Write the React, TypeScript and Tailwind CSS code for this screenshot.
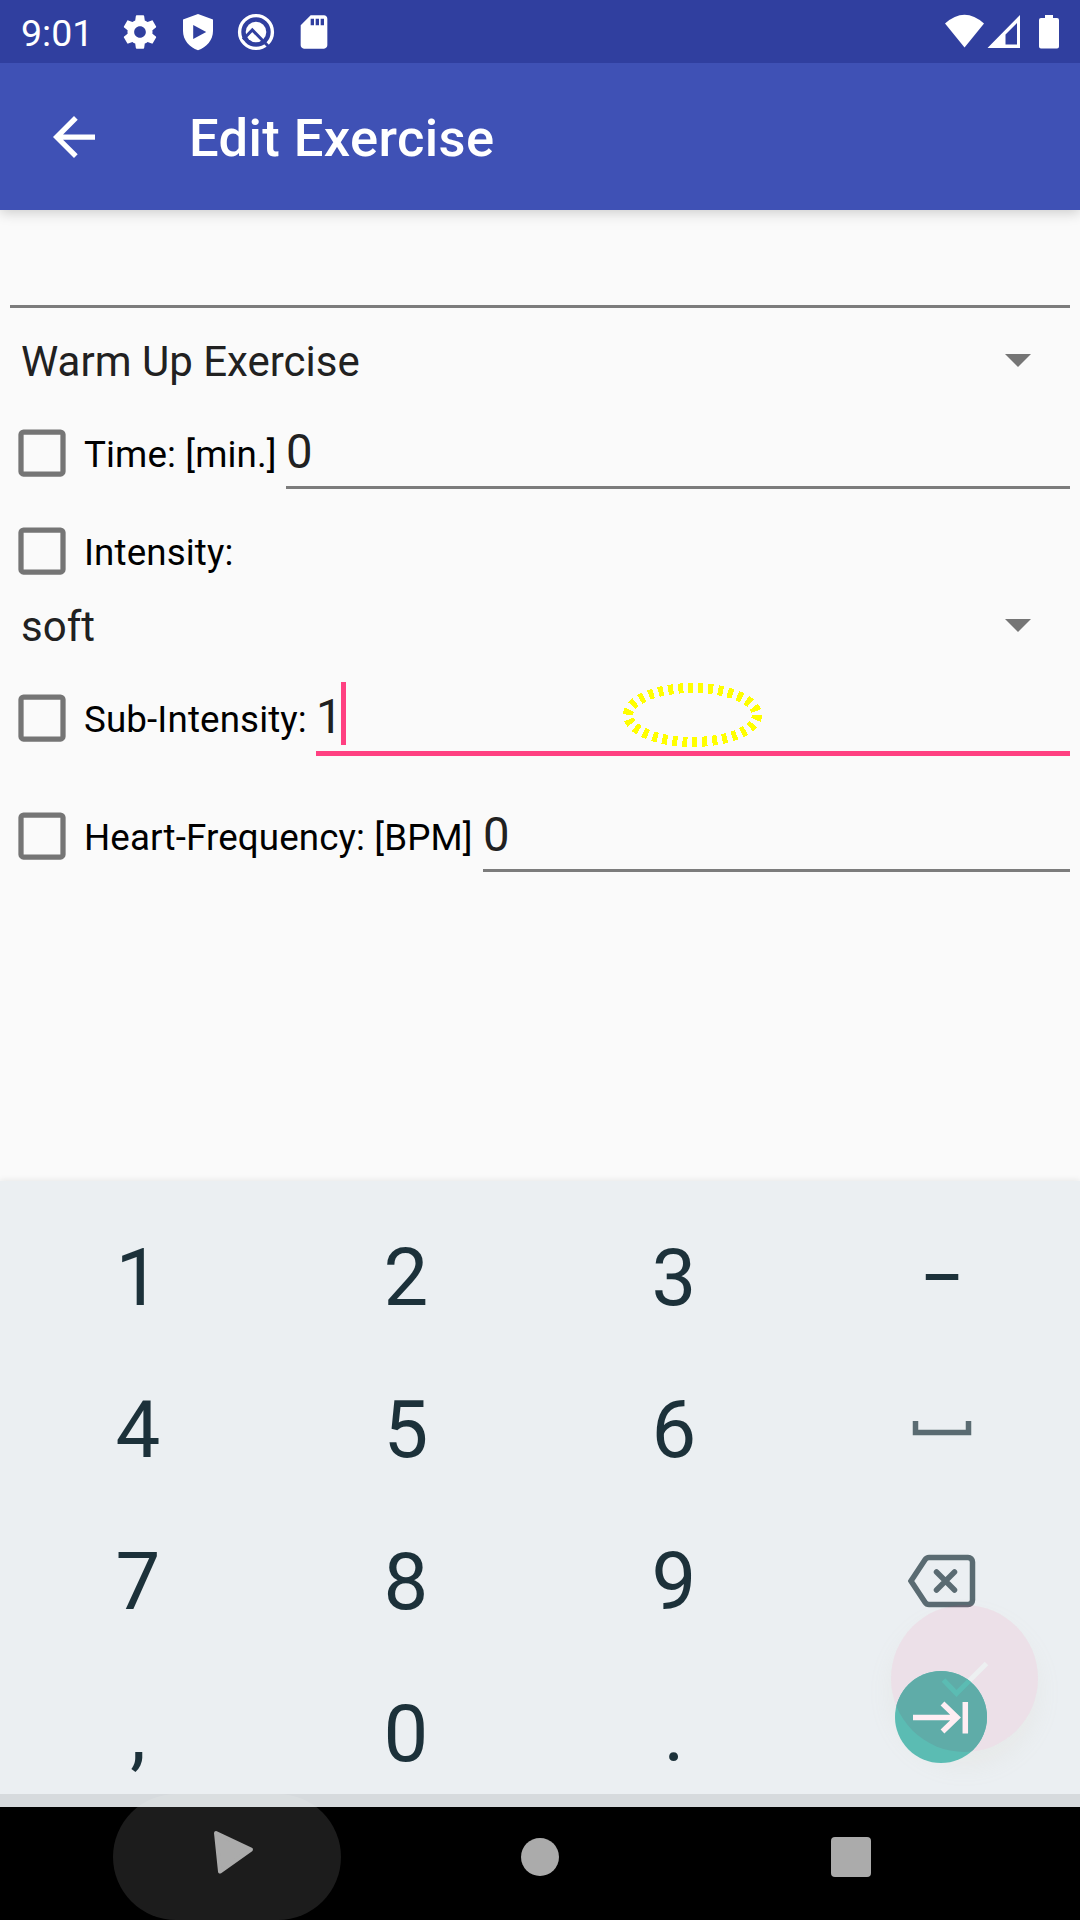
import React from "react";

const Gear = () => (
  <svg viewBox="0 0 24 24" className="size-10" fill="#fff">
    <path d="M19.43 12.98c.04-.32.07-.64.07-.98s-.03-.66-.07-.98l2.11-1.65c.19-.15.24-.42.12-.64l-2-3.46c-.12-.22-.39-.3-.61-.22l-2.49 1c-.52-.4-1.08-.73-1.69-.98l-.38-2.65C14.46 2.18 14.25 2 14 2h-4c-.25 0-.46.18-.49.42l-.38 2.65c-.61.25-1.17.59-1.69.98l-2.49-1c-.23-.09-.49 0-.61.22l-2 3.46c-.13.22-.07.49.12.64l2.11 1.65c-.04.32-.07.65-.07.98s.03.66.07.98l-2.11 1.65c-.19.15-.24.42-.12.64l2 3.46c.12.22.39.3.61.22l2.49-1c.52.4 1.08.73 1.69.98l.38 2.65c.03.24.24.42.49.42h4c.25 0 .46-.18.49-.42l.38-2.65c.61-.25 1.17-.59 1.69-.98l2.49 1c.23.09.49 0 .61-.22l2-3.46c.12-.22.07-.49-.12-.64l-2.11-1.65zM12 15.500c-1.930 0-3.500-1.570-3.500-3.500s1.570-3.500 3.500-3.500 3.500 1.570 3.500 3.500-1.570 3.500-3.500 3.500z" />
  </svg>
);

const Shield = () => (
  <svg viewBox="0 0 40 40" className="size-10" fill="#fff" fillRule="evenodd">
    <path d="M20 2 35 7.500V19c0 9-6.500 16.500-15 19.200C11.500 35.500 5 28 5 19V7.500zM15.200 13v14l13-7z" />
  </svg>
);

const Doctor = () => (
  <svg viewBox="0 0 40 40" className="size-10" fill="none">
    <circle cx="20" cy="20" r="16.400" stroke="#fff" strokeWidth="3.400" />
    <circle cx="20" cy="20" r="10.300" fill="#fff" />
    <path d="M7 27.500 16.300 18 34 36" stroke="#303f9f" strokeWidth="3" />
  </svg>
);

const SdCard = () => (
  <svg viewBox="0 0 24 24" className="size-10" fill="#fff">
    <path d="M18 2h-8L4.020 8 4 20c0 1.100.9 2 2 2h12c1.100 0 2-.9 2-2V4c0-1.100-.9-2-2-2zm-6 6h-2V4h2v4zm3 0h-2V4h2v4zm3 0h-2V4h2v4z" />
  </svg>
);

const Checkbox = () => (
  <svg viewBox="0 0 48 48" className="ml-[18px] size-12 shrink-0">
    <rect x="3" y="3" width="42" height="42" rx="2.500" fill="none" stroke="#757575" strokeWidth="5.250" />
  </svg>
);

const Caret = () => (
  <svg viewBox="0 0 26 13" className="mr-[49.500px] h-[13px] w-[26px]">
    <path d="M0 0h26L13 13z" fill="#757575" />
  </svg>
);

const Spinner = ({ text, className }: { text: string; className: string }) => (
  <div className={`flex items-center justify-between pl-[21px] text-[42px] text-[#212121] ${className}`}>
    <span className="mt-0.5">{text}</span>
    <Caret />
  </div>
);

const Field = ({ label, value, width, focused }: { label: string; value: string; width: string; focused?: boolean }) => (
  <div className="flex h-[118px] shrink-0 pr-2.5">
    <div className="flex items-center">
      <Checkbox />
    </div>
    <label className={`ml-[18px] mt-[39px] h-11 shrink-0 whitespace-nowrap text-[36.750px] leading-[44px] tracking-[0.120px] text-black ${width}`}>{label}</label>
    <div
      className={`flex grow text-[47.250px] text-[#212121] ${focused ? "h-[97px] border-b-[5px] border-[#ff4081]" : "h-[95px] border-b-[3px] border-[#7c7c7c]"}`}
    >
      <span className="mt-[30px] h-14 leading-[56px]">{value}</span>
      {focused && <i className="-ml-[1.500px] mt-[23px] h-[63px] w-[5px] bg-[#ff4081]" />}
    </div>
  </div>
);

const Space = () => (
  <svg viewBox="0 0 60 16" className="h-4 w-[60px]">
    <path d="M3.500 1v11.500h53V1" fill="none" stroke="#5a6b72" strokeWidth="5.500" />
  </svg>
);

const Backspace = () => (
  <svg viewBox="0 0 68 54" className="mt-px h-[54px] w-[68px]" fill="none" stroke="#5a6b72" strokeWidth="5.500">
    <path d="M21 3.500h39a4.500 4.500 0 0 1 4.500 4.500v38a4.500 4.500 0 0 1-4.500 4.500H21q-2.500 0-4-2.300L3 27 17 5.800Q18.500 3.500 21 3.500z" />
    <path d="m28.500 18 18 18m0-18-18 18" strokeLinecap="round" />
  </svg>
);

const KEYS = ["1", "2", "3", "−", "4", "5", "6", "space", "7", "8", "9", "back", ",", "0", ".", "next"];

const Key = ({ name }: { name: string }) => {
  if (name === "space") return <Space />;
  if (name === "back") return <Backspace />;
  if (name === "next") return null;
  return <span className="mt-1">{name}</span>;
};

/* The translucent confirm button floats over the keyboard's round "next" key. */
const FloatingButtons = () => (
  <div className="absolute left-[891px] top-[1605px] size-[147px] rounded-full shadow-[0_14px_24px_rgba(200,190,160,0.10)]">
    <svg viewBox="891 1605 147 160" className="h-40 w-[147px]" fill="none">
      <defs>
        <clipPath id="next">
          <circle cx="941" cy="1717" r="46" />
        </clipPath>
      </defs>
      <circle cx="964.500" cy="1678.500" r="73.500" fill="#ff4081" fillOpacity="0.085" />
      <path d="m943.500 1680 13 13.500 30-30" stroke="#edf0f1" strokeWidth="5" />
      <g clipPath="url(#next)">
        <rect x="891" y="1660" width="100" height="105" fill="#5bbcb3" />
        <circle cx="964.500" cy="1678.500" r="73.500" fill="#5faca8" />
        <path d="m943.500 1680 13 13.500 30-30" stroke="#5bbcb3" strokeWidth="5" />
      </g>
      <path d="M913 1717.500h44m-14.500-14 14.500 14-14.500 14M965.300 1702v31.500" stroke="#ffeef3" strokeWidth="5.500" />
    </svg>
  </div>
);

export default function App() {
  return (
    <div className="relative flex h-[1920px] w-[1080px] flex-col overflow-hidden bg-[#fafafa] font-['Roboto',sans-serif]">
      <header className="z-10 shrink-0 bg-[#3f51b5] shadow-[0_3px_12px_rgba(0,0,0,0.18)]">
        <div className="flex h-[63px] items-center bg-[#303f9f] text-white">
          <span className="ml-[21px] mt-0.5 w-[99px] text-[37.500px] leading-[44px]">9:01</span>
          <div className="flex gap-[18px]">
            <Gear />
            <Shield />
            <Doctor />
            <SdCard />
          </div>
          <svg viewBox="0 0 120 36" className="ml-auto mr-[18px] h-9 w-[120px]" fill="#fff">
            <path d="M3 9.500Q22.500-8 42 9.500L22.500 33.500z" />
            <path fillRule="evenodd" d="M78 1v33H45.500zM75 9 63.500 20.500V30.500H75z" />
            <path d="M103 1h8v3h4a2 2 0 0 1 2 2v26.500a2 2 0 0 1-2 2H99a2 2 0 0 1-2-2V6a2 2 0 0 1 2-2h4z" />
          </svg>
        </div>
        <div className="flex h-[147px] items-center">
          <svg viewBox="4 4 16 16" className="ml-[53px] size-[42px]" fill="#fff">
            <path d="M20 11H7.830l5.590-5.590L12 4l-8 8 8 8 1.410-1.410L7.830 13H20v-2z" />
          </svg>
          <h1 className="ml-[94px] mt-[3px] text-[52.500px] font-medium leading-[62px] tracking-[0.400px] text-white">Edit Exercise</h1>
        </div>
      </header>

      <main className="flex h-[971px] shrink-0 flex-col">
        <div className="mx-2.5 h-[98px] shrink-0 border-b-[3px] border-[#7c7c7c]" />
        <Spinner text="Warm Up Exercise" className="-mb-[19px] h-[105px] shrink-0" />
        <Field label="Time: [min.]" value="0" width="w-[202px]" />
        <div className="-mt-2.5 flex h-[98px] shrink-0 items-center">
          <Checkbox />
          <span className="ml-[18px] mt-1 text-[36.750px] leading-[44px] tracking-[0.120px] text-black">Intensity:</span>
        </div>
        <Spinner text="soft" className="mb-[9px] h-[50px] shrink-0" />
        <Field label="Sub-Intensity:" value="1" width="w-[232px]" focused />
        <Field label="Heart-Frequency: [BPM]" value="0" width="w-[399px]" />
      </main>

      <section className="h-[613px] shrink-0 bg-[#ebeff2] pl-1 pr-1 pt-[19px] shadow-[0_-1px_6px_rgba(0,0,0,0.08)]">
        <div className="grid grid-cols-4 text-[79.700px] text-[#1c313a]">
          {KEYS.map((name) => (
            <div key={name} className="flex h-[152px] items-center justify-center">
              <Key name={name} />
            </div>
          ))}
        </div>
      </section>

      <nav className="flex h-[126px] shrink-0 gap-[84px] border-t-[13px] border-[#d6dadd] bg-black pl-[113px]">
        <div className="-mt-[13px] h-[126px] w-[228px] rounded-[63px] bg-white/11">
          <svg viewBox="0 0 228 126" className="h-[126px] w-[228px]">
            <path d="m103 39 35 16.500-31 22z" fill="#ababab" stroke="#ababab" strokeWidth="4" strokeLinejoin="round" />
          </svg>
        </div>
        <div className="flex h-[100px] w-[228px] items-center justify-center pl-0.5">
          <div className="size-[38px] rounded-full bg-[#ababab]" />
        </div>
        <div className="flex h-[100px] w-[228px] items-center justify-center">
          <div className="size-10 rounded bg-[#ababab]" />
        </div>
      </nav>

      <FloatingButtons />

      <svg viewBox="0 0 140 66" className="absolute left-[623px] top-[682px] h-[66px] w-[140px]" shapeRendering="crispEdges">
        <ellipse cx="69.500" cy="33" rx="64.500" ry="27" fill="none" stroke="#ff0" strokeWidth="10" strokeDasharray="5 5" />
      </svg>
    </div>
  );
}
